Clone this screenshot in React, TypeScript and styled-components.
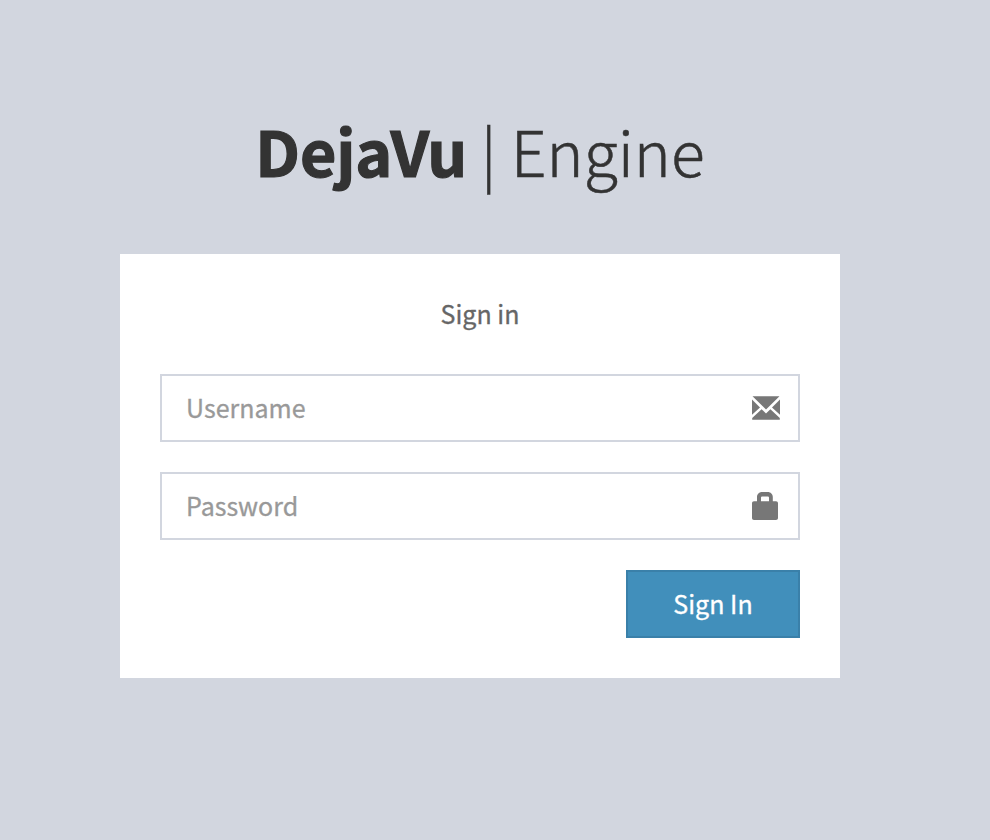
import React from "react";
import styled, { createGlobalStyle } from "styled-components";

const GlobalStyle = createGlobalStyle`
  *, *::before, *::after { box-sizing: border-box; }
  body {
    margin: 0;
    background: #d2d6df;
    color: #333;
    font-family: "Noto Sans CJK SC", "Open Sans", sans-serif;
  }
`;

const Page = styled.main`
  width: 100%;
  min-height: 840px;
  padding: 101px 0 0 120px;
  background: #d2d6df;
`;

const LoginBox = styled.div`
  width: 720px;
`;

const Logo = styled.h1`
  display: flex;
  justify-content: center;
  margin: 0 0 55px;
  height: 98px;
  font-size: 62.7px;
  line-height: 98px;
  font-weight: 300;
  white-space: pre;
  -webkit-text-stroke: 0.5px #333;
`;

const Brand = styled.b`
  font-weight: 700;
  letter-spacing: -0.1px;
  -webkit-text-stroke: 1.2px #333;
`;

const Panel = styled.form`
  display: flex;
  flex-direction: column;
  height: 424px;
  padding: 40px;
  background: #fff;
`;

const Message = styled.p`
  margin: 0 0 42px;
  text-align: center;
  font-size: 25px;
  line-height: 38px;
  color: #666;
  -webkit-text-stroke: 0.3px #666;
`;

const Field = styled.label`
  display: flex;
  align-items: center;
  height: 68px;
  margin-bottom: 30px;
  padding: 0 18px 0 24px;
  border: 2px solid #d2d6df;
`;

const Input = styled.input`
  flex: 1;
  min-width: 0;
  height: 64px;
  padding: 0 0 2px;
  border: 0;
  outline: 0;
  background: transparent;
  font: inherit;
  font-size: 25px;
  color: #555;
  &::placeholder {
    color: #999;
    opacity: 1;
    -webkit-text-stroke: 0.3px #999;
  }
`;

const Icon = styled.svg`
  display: block;
  width: 28px;
  height: 28px;
  fill: #777;
`;

const SubmitButton = styled.button`
  align-self: flex-end;
  width: 174px;
  height: 68px;
  padding: 0 0 2px;
  border: 2px solid #3a80a9;
  background: #418fbb;
  color: #fff;
  font: inherit;
  font-size: 25px;
  -webkit-text-stroke: 0.3px #fff;
`;

function EnvelopeIcon() {
  return (
    <Icon viewBox="0 0 28 28">
      <path d="M0.5 2.2H27.5L14 15.4ZM0 5.6L8 13.4L0 20.8ZM28 5.6L20 13.4L28 20.8ZM9.6 15.2L14 19.4L18.4 15.2L27.8 24V25.8H0.2V24Z" />
    </Icon>
  );
}

function LockIcon() {
  return (
    <Icon viewBox="0 0 28 28">
      <path
        fillRule="evenodd"
        d="M5 9.2V5C5 2.2 7.2 0 10 0H15.8C18.6 0 20.8 2.2 20.8 5V9.2H24C25.2 9.2 26 10 26 11.2V26C26 27.2 25.2 28 24 28H2C.8 28 0 27.2 0 26V11.2C0 10 .8 9.2 2 9.2ZM9 9.2H17V5.7C17 4.9 16.4 4.4 15.7 4.4H10.3C9.6 4.4 9 4.9 9 5.7Z"
      />
    </Icon>
  );
}

export default function App() {
  return (
    <>
      <GlobalStyle />
      <Page>
        <LoginBox>
          <Logo>
            <Brand>DejaVu</Brand> | Engine
          </Logo>
          <Panel onSubmit={(event) => event.preventDefault()}>
            <Message>Sign in</Message>
            <Field>
              <Input type="text" placeholder="Username" />
              <EnvelopeIcon />
            </Field>
            <Field>
              <Input type="password" placeholder="Password" />
              <LockIcon />
            </Field>
            <SubmitButton type="submit">Sign In</SubmitButton>
          </Panel>
        </LoginBox>
      </Page>
    </>
  );
}
